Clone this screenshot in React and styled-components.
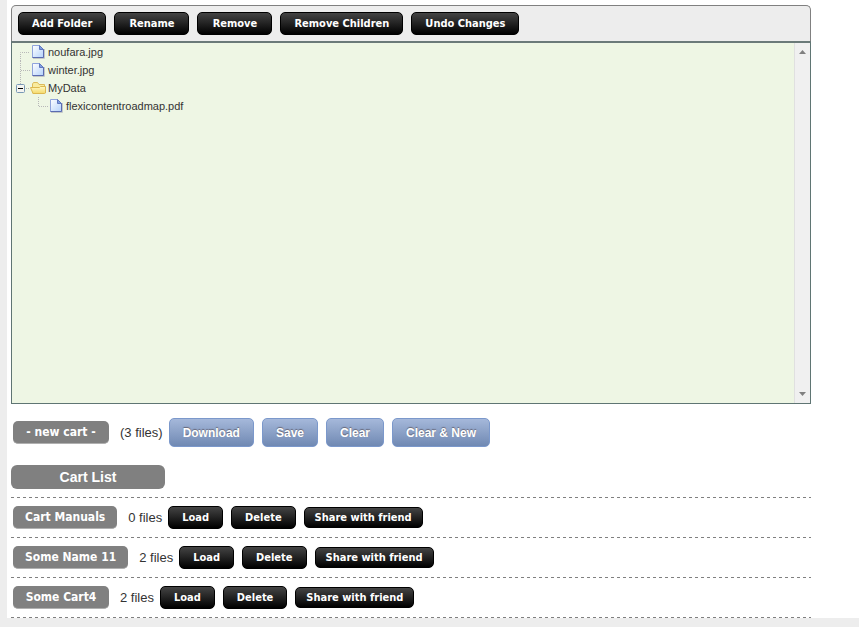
import React from 'react'
import styled, { createGlobalStyle } from 'styled-components'

const carts = [
    { name: 'Cart Manuals', count: 0 },
    { name: 'Some Name 11', count: 2 },
    { name: 'Some Cart4', count: 2 },
]

const treeActions = ['Add Folder', 'Rename', 'Remove', 'Remove Children', 'Undo Changes']
const cartActions = ['Download', 'Save', 'Clear', 'Clear & New']

function FileIcon() {
    return (
        <svg width="18" height="18" viewBox="0 0 18 18" aria-hidden="true">
            <defs>
                <linearGradient id="page" x1="0" y1="0" x2="1" y2="1">
                    <stop offset="0" stopColor="#ffffff" />
                    <stop offset="1" stopColor="#b4d2fb" />
                </linearGradient>
            </defs>
            <path d="M3 15.5H14.5V6" fill="none" stroke="#c3c8c6" />
            <path d="M2.5 2.5H9.5L13.5 6.5V14.5H2.5Z" fill="url(#page)" stroke="#8fa3dc" />
            <path d="M9.5 2.5V6.5H13.5Z" fill="#7f9ee0" stroke="#6078c0" />
            <path d="M13.5 6.5V14.5H2.5" fill="none" stroke="#5a6bb0" />
        </svg>
    )
}

function FolderIcon() {
    return (
        <svg width="18" height="18" viewBox="0 0 18 18" aria-hidden="true">
            <defs>
                <linearGradient id="folder" x1="0" y1="0" x2="0" y2="1">
                    <stop offset="0" stopColor="#fff9c4" />
                    <stop offset="1" stopColor="#f4d96a" />
                </linearGradient>
            </defs>
            <path d="M2.5 14V5L3.5 3.5H7.5L9 5.5H14.5V14Z" fill="#f9eb9e" stroke="#dcbb5a" />
            <path d="M0.5 8.5H9.5L10.5 7.5H15.5V14L14.5 14.5H3Z" fill="url(#folder)" stroke="#dcb850" />
        </svg>
    )
}

function MinusIcon() {
    return (
        <svg width="9" height="9" viewBox="0 0 9 9" aria-hidden="true">
            <rect x="0.5" y="0.5" width="8" height="8" rx="1" fill="#f4f4f0" stroke="#7898b5" />
            <path d="M2 4.5H7" stroke="#000" />
        </svg>
    )
}

// dotted connector in front of a tree node
function Connector({ kind }) {
    const paths = {
        first: 'M8.5 18V9.5H18',
        middle: 'M8.5 0V18M9 9.5H18',
        last: 'M8.5 0V9.5H18',
        open: 'M8.5 0V5M14 9.5H18',
    }
    return (
        <svg width="18" height="18" viewBox="0 0 18 18" aria-hidden="true">
            <path d={paths[kind]} fill="none" stroke="#b8b8b8" strokeDasharray="1 1" />
        </svg>
    )
}

function App() {
    return (
        <Page>
            <GlobalStyle />
            <Content>
                <Toolbar>
                    {treeActions.map((label) => (
                        <DarkButton key={label} type="button">{label}</DarkButton>
                    ))}
                </Toolbar>
                <TreePanel>
                    <Tree>
                        <Node><Connector kind="first" /><FileIcon />noufara.jpg</Node>
                        <Node><Connector kind="middle" /><FileIcon />winter.jpg</Node>
                        <Node>
                            <Toggle>
                                <Connector kind="open" />
                                <button type="button" aria-label="Collapse MyData"><MinusIcon /></button>
                            </Toggle>
                            <FolderIcon />MyData
                        </Node>
                        <Node $level={1}><Connector kind="last" /><FileIcon />flexicontentroadmap.pdf</Node>
                    </Tree>
                    <ScrollBar>
                        <button type="button" aria-label="Scroll up">
                            <svg width="7" height="4" viewBox="0 0 7 4"><path d="M0 4L3.5 0L7 4Z" fill="#808080" /></svg>
                        </button>
                        <button type="button" aria-label="Scroll down">
                            <svg width="7" height="4" viewBox="0 0 7 4"><path d="M0 0L3.5 4L7 0Z" fill="#808080" /></svg>
                        </button>
                    </ScrollBar>
                </TreePanel>
                <CurrentCart>
                    <CartName>- new cart -</CartName>
                    <Count>(3 files)</Count>
                    <Actions>
                        {cartActions.map((label) => (
                            <BlueButton key={label} type="button">{label}</BlueButton>
                        ))}
                    </Actions>
                </CurrentCart>
                <ListTitle>Cart List</ListTitle>
                <CartList>
                    {carts.map((cart) => (
                        <CartRow key={cart.name}>
                            <CartName>{cart.name}</CartName>
                            <Count>{cart.count} files</Count>
                            <Actions>
                                <DarkButton type="button">Load</DarkButton>
                                <DarkButton type="button">Delete</DarkButton>
                                <DarkButton type="button" $small>Share with friend</DarkButton>
                            </Actions>
                        </CartRow>
                    ))}
                </CartList>
            </Content>
        </Page>
    )
}

const GlobalStyle = createGlobalStyle`
    * {
        box-sizing: border-box;
    }
    body {
        margin: 0;
        background-color: #ededed;
        color: #333;
        font-family: "Liberation Sans", Arial, sans-serif;
        font-size: 13px;
    }
    button {
        cursor: pointer;
    }
`

const Page = styled.main`
    margin-left: 7px;
    padding: 5px 4px 0;
    background-color: #fff;
`

const Content = styled.div`
    max-width: 800px;
`

const Toolbar = styled.div`
    display: flex;
    gap: 8px;
    padding: 6px;
    border: 1px solid #808080;
    border-bottom-width: 0;
    border-radius: 5px 5px 0 0;
    background-color: #ededed;
    button {
        min-width: 75px;
    }
`

const Button = styled.button`
    display: inline-flex;
    align-items: center;
    justify-content: center;
    border-radius: 5px;
    color: #fff;
    font-weight: bold;
    white-space: nowrap;
`

const DarkButton = styled(Button)`
    height: ${(props) => (props.$small ? '21px' : '23px')};
    padding: 0 ${(props) => (props.$small ? '10px' : '13px')};
    border: 1px solid #000;
    background: linear-gradient(#444, #000);
    font-family: "DejaVu Sans Condensed", Tahoma, sans-serif;
    font-size: 11px;
`

const BlueButton = styled(Button)`
    height: 29px;
    padding: 0 13px;
    border: 1px solid #7b98cb;
    background: linear-gradient(#a5b8da, #7089b3);
    font-family: "Liberation Sans", Arial, sans-serif;
    font-size: 12px;
    text-shadow: 0 -1px 1px #667;
`

const TreePanel = styled.section`
    display: flex;
    height: 363px;
    border: 1px solid #5f7573;
    border-top: 2px solid #6b7a79;
    background-color: #eef6e4;
`

const Tree = styled.ul`
    flex: 1;
    margin: 0;
    padding: 0;
    list-style: none;
    font-size: 11px;
`

const Node = styled.li`
    display: flex;
    align-items: center;
    height: 18px;
    padding-left: ${(props) => (props.$level || 0) * 18}px;
`

const Toggle = styled.span`
    position: relative;
    height: 18px;
    button {
        position: absolute;
        top: 5px;
        left: 4px;
        display: flex;
        padding: 0;
        border: 0;
        background: none;
    }
`

const ScrollBar = styled.div`
    display: flex;
    flex-direction: column;
    justify-content: space-between;
    width: 16px;
    border-left: 1px solid #e0e0e0;
    background-color: #f0f0f0;
    button {
        display: flex;
        align-items: center;
        justify-content: center;
        height: 18px;
        padding: 0;
        border: 0;
        background: none;
    }
`

const CurrentCart = styled.div`
    display: flex;
    align-items: center;
    padding: 14px 2px 18px;
`

const CartName = styled.span`
    display: flex;
    align-items: center;
    justify-content: center;
    min-width: 96px;
    height: 23px;
    padding: 0 12px;
    border-radius: 5px;
    border-bottom: 1px solid #b0b0b0;
    background-color: #808080;
    color: #fff;
    font-family: "DejaVu Sans Condensed", Tahoma, sans-serif;
    font-size: 12px;
    font-weight: bold;
    white-space: nowrap;
`

const Count = styled.span`
    margin: 0 6px 0 11px;
    white-space: nowrap;
`

const Actions = styled.div`
    display: flex;
    align-items: center;
    gap: 8px;
`

const ListTitle = styled.h2`
    width: 154px;
    margin: 0 0 8px;
    border-radius: 6px;
    background-color: #808080;
    color: #fff;
    font-size: 14px;
    line-height: 24px;
    text-align: center;
`

const dashes = 'repeating-linear-gradient(90deg, #808080 0 3px, transparent 3px 6px)'

const CartList = styled.ul`
    margin: 0;
    padding: 1px 0 0;
    background: ${dashes} top / 100% 1px no-repeat;
    list-style: none;
`

const CartRow = styled.li`
    display: flex;
    align-items: center;
    height: 40px;
    padding: 0 2px 1px;
    background: ${dashes} bottom / 100% 1px no-repeat;
`

export default App
